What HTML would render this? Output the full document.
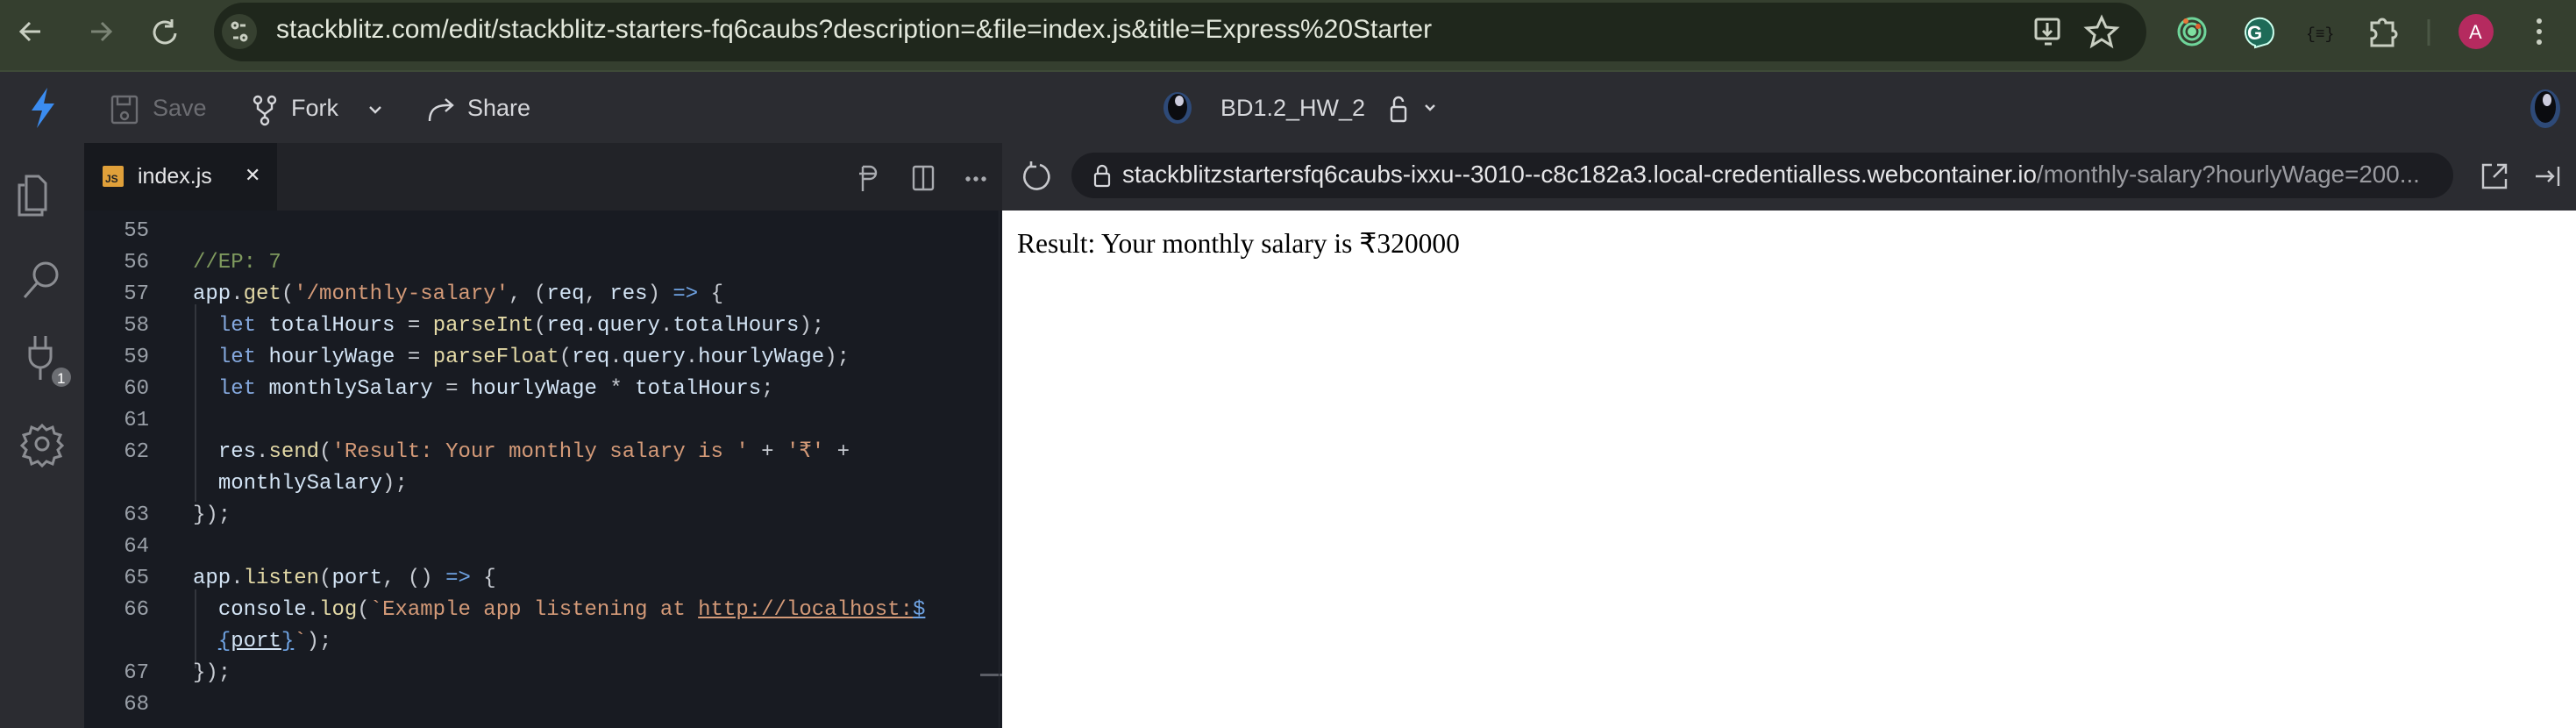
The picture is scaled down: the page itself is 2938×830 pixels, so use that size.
<!DOCTYPE html>
<html><head><meta charset="utf-8"><style>
*{margin:0;padding:0;box-sizing:border-box}
body{width:2938px;height:830px;overflow:hidden;background:#181b22;font-family:"Liberation Sans",sans-serif;position:relative}
.abs{position:absolute}
#chrome{left:0;top:0;width:2938px;height:82px;background:#353f2f;border-bottom:2px solid #3e4a38}
#pill{left:244px;top:3px;width:2204px;height:67px;border-radius:34px;background:#1f271c}
.ctext{color:#e3e8dc;font-size:30px;top:17px;white-space:nowrap}
#tb{left:0;top:82px;width:2938px;height:81px;background:#2b2c31}
.tt{color:#d6d7db;font-size:27px;top:108px;white-space:nowrap}
#act{left:0;top:163px;width:96px;height:667px;background:#2b2c31}
#tabs{left:96px;top:163px;width:1047px;height:77px;background:#222328}
#tab{left:96px;top:163px;width:220px;height:77px;background:#17191e}
#pbar{left:1143px;top:163px;width:1795px;height:77px;background:#2b2c31}
#ppill{left:1222px;top:174px;width:1576px;height:52px;border-radius:26px;background:#1c1d22}
#ed{left:96px;top:240px;width:1047px;height:590px;background:#181b22}
#prev{left:1143px;top:240px;width:1795px;height:590px;background:#fff}
.code{font-family:"Liberation Mono",monospace;font-size:24px;white-space:pre;line-height:36px}
.ln{left:130px;width:40px;text-align:right;color:#9aa0a8}
.c{color:#7f9a5e}.k{color:#84a8de}.v{color:#d3e4f5}.f{color:#e3d9a6}.s{color:#d49a78}.p{color:#c6cad1}.o{color:#6fa3e3}
</style></head><body>
<div id="chrome" class="abs"></div>
<div id="pill" class="abs"></div>
<svg class="abs" style="left:0;top:0" width="300" height="82" fill="none" stroke="#c9cfc2" stroke-width="3">
<path d="M46 36h-22M34 26l-10 10 10 10"/><path d="M104 36h22M116 26l10 10-10 10" stroke="#7b8475"/>
<path d="M196 28a12 12 0 1 0 4 10M196 22v8h-8"/>
<circle cx="273" cy="36" r="20" fill="#364030" stroke="none"/>
<circle cx="268" cy="29" r="3"/><path d="M274 29h6M266 43h6"/><circle cx="278" cy="43" r="3"/>
</svg>
<div class="abs ctext" style="left:315px">stackblitz.com/edit/stackblitz-starters-fq6caubs?description=&amp;file=index.js&amp;title=Express%20Starter</div>
<svg class="abs" style="left:2310px;top:14px" width="628" height="46" fill="none" stroke="#c9cfc2" stroke-width="3">
<rect x="12" y="8" width="26" height="22" rx="2"/><path d="M25 12v14M20 21l5 5 5-5M22 36h8"/>
<path d="M87 6l5 11 12 1-9 8 3 12-11-7-11 7 3-12-9-8 12-1z"/>
<circle cx="190" cy="22" r="15" stroke="#6fd59a"/><circle cx="190" cy="22" r="9" stroke="#6fd59a"/><circle cx="190" cy="22" r="5" fill="#7fe0a0" stroke="none"/><circle cx="183" cy="10" r="3" fill="#e8783a" stroke="none"/><circle cx="197" cy="16" r="3" fill="#e0602f" stroke="none"/>
<path d="M262 38a16 16 0 1 1 14-2l-14 4z" fill="#1e6b58" stroke="#cfe" stroke-width="2"/><text x="253" y="31" fill="#fff" stroke="none" font-size="22" font-weight="bold" font-family="Liberation Sans">G</text>
<text x="320" y="30" fill="#111" stroke="none" font-size="18" font-family="Liberation Mono">{≡}</text>
<path d="M395 12h8a4 4 0 0 1 8 0h8v9a4 4 0 0 1 0 8v9h-24v-8a4 4 0 0 0 0-10z"/>
<path d="M460 8v30" stroke="#4b5745"/>
<circle cx="514" cy="22" r="20" fill="#b52a5f" stroke="none"/><text x="506" y="30" fill="#fff" stroke="none" font-size="22" font-family="Liberation Sans">A</text>
<circle cx="586" cy="10" r="3" fill="#c9cfc2" stroke="none"/><circle cx="586" cy="22" r="3" fill="#c9cfc2" stroke="none"/><circle cx="586" cy="34" r="3" fill="#c9cfc2" stroke="none"/>
</svg>

<div id="tb" class="abs"></div>
<svg class="abs" style="left:30px;top:98px" width="40" height="50"><path d="M24 2L6 28h12l-6 20 20-28H20z" fill="#3b8cf0"/></svg>
<svg class="abs" style="left:124px;top:108px" width="520" height="36" fill="none" stroke="#d6d7db" stroke-width="2.4">
<rect x="4" y="2" width="28" height="30" rx="2" stroke="#6c6d72"/><circle cx="18" cy="24" r="4" stroke="#6c6d72"/><path d="M10 2v9h14V2" stroke="#6c6d72"/>
<circle cx="170" cy="6" r="4"/><circle cx="186" cy="6" r="4"/><circle cx="178" cy="30" r="4"/><path d="M170 10v6l8 6 8-6v-6M178 22v4"/>
<path d="M298 14l6 6 6-6"/>
<path d="M366 30c0-12 6-18 20-18h4M384 5l8 7-8 7"/>
</svg>
<div class="abs tt" style="left:174px;color:#6c6d72">Save</div>
<div class="abs tt" style="left:332px">Fork</div>
<div class="abs tt" style="left:533px">Share</div>
<svg class="abs" style="left:1326px;top:103px" width="34" height="40"><ellipse cx="17" cy="20" rx="16" ry="18" fill="#2e4a78"/><ellipse cx="17" cy="19" rx="11" ry="15" fill="#0b0c10"/><ellipse cx="19" cy="12" rx="5" ry="6" fill="#ccd"/></svg>
<div class="abs tt" style="left:1392px">BD1.2_HW_2</div>
<svg class="abs" style="left:1584px;top:108px" width="60" height="32" fill="none" stroke="#d6d7db" stroke-width="2.4"><rect x="3" y="14" width="16" height="16" rx="2"/><path d="M6 14V8a5 5 0 0 1 10 0"/><path d="M42 12l5 5 5-5"/></svg>
<svg class="abs" style="left:2885px;top:100px" width="36" height="48"><ellipse cx="18" cy="24" rx="17" ry="22" fill="#2e4a78"/><ellipse cx="18" cy="22" rx="12" ry="18" fill="#0b0c10"/><ellipse cx="20" cy="14" rx="5" ry="7" fill="#ccd"/></svg>

<div id="act" class="abs"></div>
<svg class="abs" style="left:0;top:163px" width="96" height="400" fill="none" stroke="#8b8d92" stroke-width="3">
<path d="M28 48h-6v34h26v-6"/><path d="M30 38h14l8 8v30H30z"/>
<circle cx="52" cy="150" r="13"/><path d="M42 160l-14 16"/>
<path d="M40 220v14M52 220v14M34 234h24v10a12 12 0 0 1-24 0zM46 256v14"/>
<circle cx="70" cy="267" r="11" fill="#6c6e73" stroke="none"/><text x="65" y="274" fill="#fff" stroke="none" font-size="17" font-family="Liberation Sans">1</text>
<circle cx="48" cy="343" r="7"/><path d="M48 322l5 5 7-3 2 7 7 2-3 7 5 5-5 5 3 7-7 2-2 7-7-3-5 5-5-5-7 3-2-7-7-2 3-7-5-5 5-5-3-7 7-2 2-7 7 3z"/>
</svg>

<div id="tabs" class="abs"></div>
<div id="tab" class="abs"></div>
<div class="abs" style="left:117px;top:189px;width:24px;height:24px;background:#e0a03a;border-radius:2px;font-size:12px;color:#222;padding:9px 0 0 3px;line-height:12px;font-weight:bold">JS</div>
<div class="abs" style="left:157px;top:187px;color:#e6e6e8;font-size:25px">index.js</div>
<div class="abs" style="left:279px;top:187px;color:#e6e6e8;font-size:22px">✕</div>
<svg class="abs" style="left:978px;top:184px" width="240" height="40" fill="none" stroke="#a9abb0" stroke-width="2.4">
<path d="M6 6v28M6 6h8a6 6 0 0 1 0 14H6M2 14h18"/>
<rect x="64" y="6" width="22" height="26" rx="2"/><path d="M75 6v26"/>
<circle cx="126" cy="20" r="1.5" fill="#a9abb0"/><circle cx="135" cy="20" r="1.5" fill="#a9abb0"/><circle cx="144" cy="20" r="1.5" fill="#a9abb0"/>
</svg>

<div id="pbar" class="abs"></div>
<svg class="abs" style="left:1162px;top:182px" width="40" height="40" fill="none" stroke="#c8c9cd" stroke-width="2.6"><path d="M24 6a14 14 0 1 1-10 1M14 2v6h6"/></svg>
<div id="ppill" class="abs"></div>
<svg class="abs" style="left:1246px;top:186px" width="22" height="28" fill="none" stroke="#d6d7db" stroke-width="2.2"><rect x="3" y="12" width="16" height="14" rx="2"/><path d="M6 12V8a5 5 0 0 1 10 0v4"/></svg>
<div class="abs" style="left:1280px;top:183px;font-size:27.8px;color:#e6e6e8;white-space:nowrap">stackblitzstartersfq6caubs-ixxu--3010--c8c182a3.local-credentialless.webcontainer.io<span style="color:#9a9ba0">/monthly-salary?hourlyWage=200...</span></div>
<svg class="abs" style="left:2828px;top:184px" width="110" height="34" fill="none" stroke="#c8c9cd" stroke-width="2.4"><path d="M14 4H4v26h26V20M20 4h10v10M30 4L16 18"/><path d="M64 17h20M78 11l6 6-6 6M90 6v22"/></svg>

<div id="ed" class="abs"></div>
<div class="abs" style="left:1118px;top:768px;width:25px;height:3px;background:#5b5e66"></div>
<div class="abs" style="left:1139px;top:240px;width:1px;height:590px;background:#24272e"></div>
<div class="abs" style="left:222px;top:347px;width:2px;height:225px;background:#33363d"></div>
<div class="abs" style="left:222px;top:672px;width:2px;height:90px;background:#33363d"></div>
<div class="abs code ln" style="top:246px">55
56
57
58
59
60
61
62

63
64
65
66

67
68</div>
<div class="abs code" style="left:220px;top:246px">
<span class="c">//EP: 7</span>
<span class="v">app</span><span class="p">.</span><span class="f">get</span><span class="p">(</span><span class="s">'/monthly-salary'</span><span class="p">, (</span><span class="v">req</span><span class="p">, </span><span class="v">res</span><span class="p">) </span><span class="o">=&gt;</span><span class="p"> {</span>
  <span class="k">let</span> <span class="v">totalHours</span> <span class="p">=</span> <span class="f">parseInt</span><span class="p">(</span><span class="v">req</span><span class="p">.</span><span class="v">query</span><span class="p">.</span><span class="v">totalHours</span><span class="p">);</span>
  <span class="k">let</span> <span class="v">hourlyWage</span> <span class="p">=</span> <span class="f">parseFloat</span><span class="p">(</span><span class="v">req</span><span class="p">.</span><span class="v">query</span><span class="p">.</span><span class="v">hourlyWage</span><span class="p">);</span>
  <span class="k">let</span> <span class="v">monthlySalary</span> <span class="p">=</span> <span class="v">hourlyWage</span> <span class="p">*</span> <span class="v">totalHours</span><span class="p">;</span>

  <span class="v">res</span><span class="p">.</span><span class="f">send</span><span class="p">(</span><span class="s">'Result: Your monthly salary is '</span> <span class="p">+</span> <span class="s">'₹'</span> <span class="p">+</span>
  <span class="v">monthlySalary</span><span class="p">);</span>
<span class="p">});</span>

<span class="v">app</span><span class="p">.</span><span class="f">listen</span><span class="p">(</span><span class="v">port</span><span class="p">, () </span><span class="o">=&gt;</span><span class="p"> {</span>
  <span class="v">console</span><span class="p">.</span><span class="f">log</span><span class="p">(</span><span class="s">`Example app listening at <u>http://localhost:</u></span><span class="o"><u>$</u></span>
  <span class="o"><u>{</u></span><span class="v"><u>port</u></span><span class="o"><u>}</u></span><span class="s">`</span><span class="p">);</span>
<span class="p">});</span>
</div>

<div id="prev" class="abs"></div>
<div class="abs" style="left:1160px;top:260px;font-family:'Liberation Serif',serif;font-size:31.5px;color:#000;white-space:nowrap">Result: Your monthly salary is ₹320000</div>
</body></html>
